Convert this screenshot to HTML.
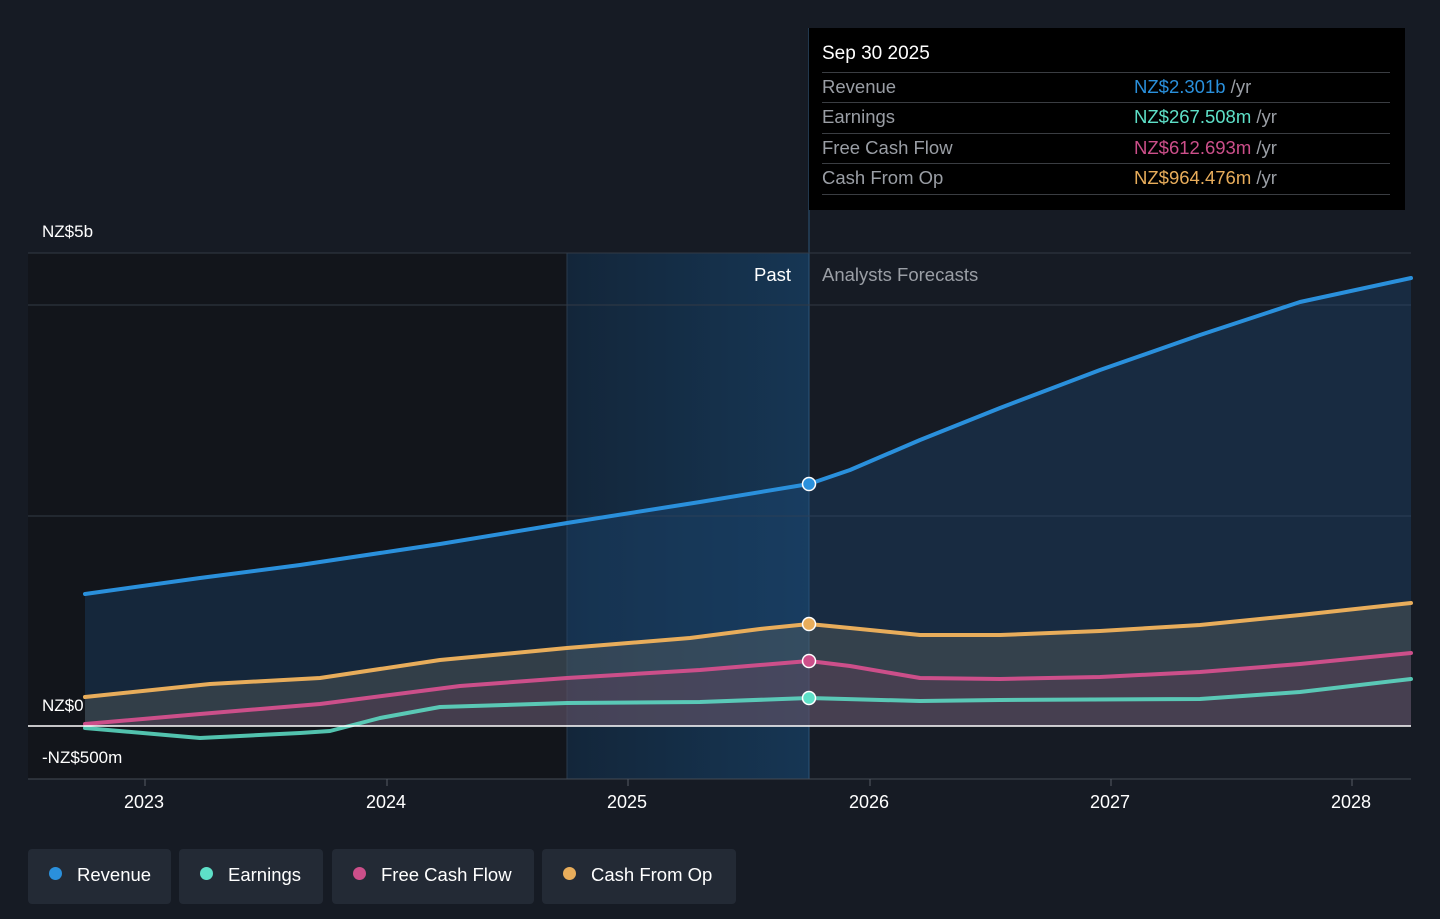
<!DOCTYPE html><html><head><style>
body{margin:0;width:1440px;height:919px;background:#161b24;font-family:"Liberation Sans",sans-serif;overflow:hidden;position:relative}
.t{position:absolute;color:#fff;font-size:17px}
.leg{position:absolute;top:849px;height:55px;background:#232a35;border-radius:4px;color:#fff;font-size:18.5px;line-height:52px;box-sizing:border-box;padding-left:49px}
.leg i{position:absolute;left:21px;top:18px;width:13px;height:13px;border-radius:50%}
.tip{position:absolute;left:809px;top:28px;width:596px;height:182px;background:#000}
.row{position:absolute;left:13px;width:568px;border-top:1px solid #3a3d42;height:30px;line-height:27px;font-size:18.5px;color:#9a9ea5}
.row b{font-weight:normal;position:absolute;left:312px}
</style></head><body>
<svg width="1440" height="919" style="position:absolute;left:0;top:0">
<defs><linearGradient id="hl" x1="0" x2="1"><stop offset="0" stop-color="#13263a"/><stop offset="1" stop-color="#163654"/></linearGradient></defs>
<rect x="28" y="253" width="539" height="526" fill="#12151b"/>
<rect x="567" y="253" width="242" height="526" fill="url(#hl)"/>
<line x1="567" y1="253" x2="567" y2="779" stroke="#2a3a4c"/>
<line x1="809" y1="28" x2="809" y2="779" stroke="#2c5478"/>
<g stroke="#333a45" stroke-width="1"><line x1="28" y1="253" x2="1411" y2="253"/><line x1="28" y1="305" x2="1411" y2="305"/><line x1="28" y1="516" x2="1411" y2="516"/><line x1="28" y1="779" x2="1411" y2="779" stroke="#444b55"/></g>
<g stroke="#555b65"><line x1="145" y1="779" x2="145" y2="786"/><line x1="387" y1="779" x2="387" y2="786"/><line x1="628" y1="779" x2="628" y2="786"/><line x1="870" y1="779" x2="870" y2="786"/><line x1="1111" y1="779" x2="1111" y2="786"/><line x1="1352" y1="779" x2="1352" y2="786"/></g>
<polygon fill="#1c4a78" fill-opacity="0.35" points="85,594 200,578 300,565 400,550 440,544 567,523 700,502 809,484 850,470 920,440 1000,408 1100,370 1200,335 1300,302 1411,278 1411,726 85,726"/>
<polygon fill="#6b6a60" fill-opacity="0.35" points="85,697 210,684 320,678 440,660 567,648 690,638 760,629 809,624 850,628 920,635 1000,635 1100,631 1200,625 1300,615 1411,603 1411,726 85,726"/>
<polygon fill="#7a3a5a" fill-opacity="0.25" points="85,724 200,714 320,704 460,686 567,678 700,670 809,661 850,666 920,678 1000,679 1100,677 1200,672 1300,664 1411,653 1411,726 85,726"/>
<g fill="none" stroke-width="4" stroke-linejoin="round" stroke-linecap="round">
<polyline stroke="#2a90dc" points="85,594 200,578 300,565 400,550 440,544 567,523 700,502 809,484 850,470 920,440 1000,408 1100,370 1200,335 1300,302 1411,278"/>
<polyline stroke="#e8ad5b" points="85,697 210,684 320,678 440,660 567,648 690,638 760,629 809,624 850,628 920,635 1000,635 1100,631 1200,625 1300,615 1411,603"/>
<polyline stroke="#cc4f8a" points="85,724 200,714 320,704 460,686 567,678 700,670 809,661 850,666 920,678 1000,679 1100,677 1200,672 1300,664 1411,653"/>
<polyline stroke="#5ee0c8" stroke-opacity="0.85" points="85,728 200,738 300,733 330,731 380,718 440,707 567,703 700,702 809,698 920,701 1000,700 1200,699 1300,692 1411,679"/>
</g>
<line x1="28" y1="726" x2="1411" y2="726" stroke="#fff" stroke-width="1.5"/>
<g stroke="#fff" stroke-width="1.5"><circle cx="809" cy="484" r="6.5" fill="#2a90dc"/><circle cx="809" cy="624" r="6.5" fill="#e8ad5b"/><circle cx="809" cy="661" r="6.5" fill="#cc4f8a"/><circle cx="809" cy="698" r="6.5" fill="#5ee0c8"/></g>
</svg>
<div class="t" style="left:42px;top:222px">NZ$5b</div>
<div class="t" style="left:42px;top:696px">NZ$0</div>
<div class="t" style="left:42px;top:748px">-NZ$500m</div>
<div class="t" style="left:754px;top:264px;font-size:18.5px">Past</div>
<div class="t" style="left:822px;top:264px;font-size:18.5px;color:#9a9ea5">Analysts Forecasts</div>
<div class="t" style="left:124px;top:792px;font-size:18px">2023</div><div class="t" style="left:366px;top:792px;font-size:18px">2024</div><div class="t" style="left:607px;top:792px;font-size:18px">2025</div><div class="t" style="left:849px;top:792px;font-size:18px">2026</div><div class="t" style="left:1090px;top:792px;font-size:18px">2027</div><div class="t" style="left:1331px;top:792px;font-size:18px">2028</div>
<div class="tip">
<div class="t" style="left:13px;top:15px;font-size:19px">Sep 30 2025</div>
<div class="row" style="top:44px">Revenue<b><span style="color:#2a90dc">NZ$2.301b</span> /yr</b></div>
<div class="row" style="top:74px">Earnings<b><span style="color:#5ee0c8">NZ$267.508m</span> /yr</b></div>
<div class="row" style="top:105px">Free Cash Flow<b><span style="color:#cc4f8a">NZ$612.693m</span> /yr</b></div>
<div class="row" style="top:135px">Cash From Op<b><span style="color:#e8ad5b">NZ$964.476m</span> /yr</b></div>
<div class="row" style="top:166px;height:0"></div>
</div>
<div class="leg" style="left:28px;width:143px"><i style="background:#2a90dc"></i>Revenue</div>
<div class="leg" style="left:179px;width:144px"><i style="background:#5ee0c8"></i>Earnings</div>
<div class="leg" style="left:332px;width:202px"><i style="background:#cc4f8a"></i>Free Cash Flow</div>
<div class="leg" style="left:542px;width:194px"><i style="background:#e8ad5b"></i>Cash From Op</div>
</body></html>
